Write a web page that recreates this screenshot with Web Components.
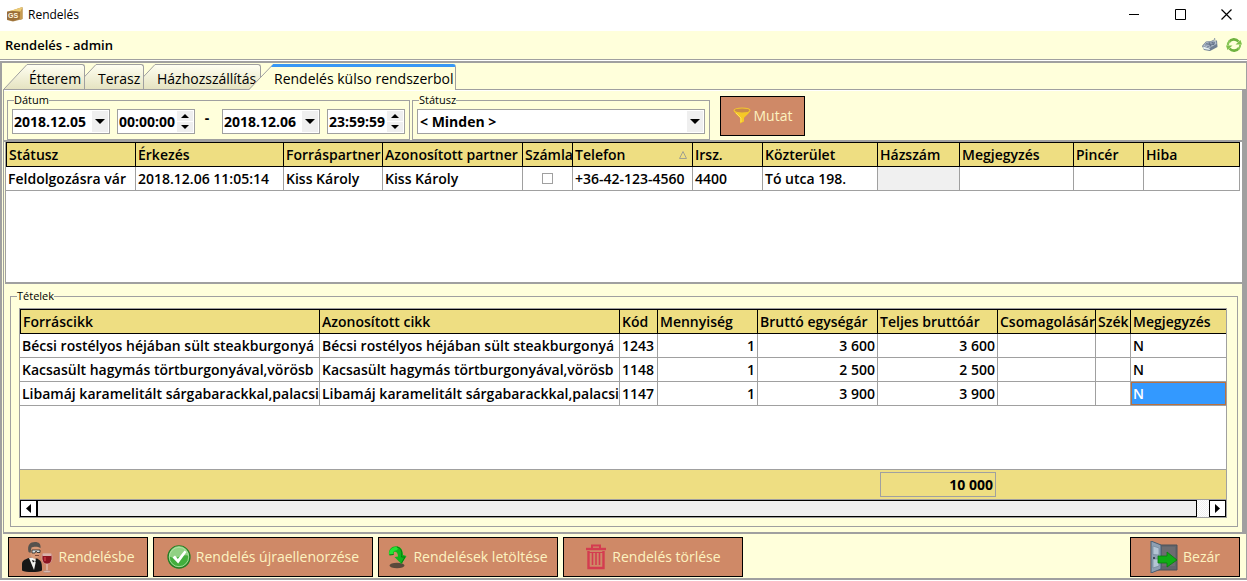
<!DOCTYPE html>
<html lang="hu">
<head>
<meta charset="utf-8">
<title>Rendelés</title>
<style>
  html, body { margin: 0; min-height: 100%; }
  body {
    --paper: #ffffdb;
    --line: #a0a0a0;
    --sand: #eede82;
    --clay: #cf8967;
    --cream: #fdf3c0;
    font-family: "Open Sans", "Noto Sans", sans-serif;
    font-size: 14px;
    line-height: 18px;
    color: #000;
    background: #fff;
  }
</style>
</head>
<body>
<order-window></order-window>

<script>
const ICONS = {
  logo: `<svg width="16" height="16" viewBox="0 0 16 16"><path d="M0 4.500 5 3.500 15.500 0V12L14 12.500 6 14.500 0 13Z" fill="#b08a50"/><path d="M3 4 15.500 0 14 5 13 4.500Z" fill="#eccb74"/><path d="M13 5 15.500 1V12L12.500 13Z" fill="#c79c52"/><path d="M0 5 6 4 13 5 12.500 12 6 14 0 12.500Z" fill="#9a6e38"/><text x="1" y="11" font-family="Liberation Sans" font-weight="700" font-size="7" fill="#fff6e0">GS</text></svg>`,
  keyboard: `<svg width="16" height="14" viewBox="0 0 16 14"><path d="M8 4 13 1.500 12.500 0" fill="none" stroke="#8a97a4" stroke-width="1"/><path d="M4 3.500 15 2.500 15.500 9 8 13 2 12 0 8Z" fill="#6f7f92"/><path d="M4.500 4 14 3 14.500 6 7.500 10 1 8Z" fill="#b5c0cf"/><path d="M4 5.500 13 4.500M3 7 12 6M5 9 13 5.500M7 4 9 9M10 4 12 7" stroke="#56657c" stroke-width=".7"/><path d="M1 8.500 7.500 10.500 8 12 1.500 11Z" fill="#e7f1f1"/></svg>`,
  refresh: `<svg width="16" height="16" viewBox="0 0 16 16"><path d="M3 5A6 6 0 0 1 12.500 4.500M13 11A6 6 0 0 1 3.500 11.500" fill="none" stroke="#6fb23f" stroke-width="2.600"/><path d="M9.500 7.500H16L14.500 3ZM0 8.500H6.500L1.500 13Z" fill="#7fc04b"/><path d="M1.800 8.500C1.500 6 2.500 5 4 3.500M14.200 7.500C14.500 10 13.500 11 12 12.500" fill="none" stroke="#88c658" stroke-width="2"/></svg>`,
  funnel: `<svg width="18" height="18" viewBox="0 0 18 18"><path d="M1 3.500C1 6 6.500 10 7 11V16.500L11 14.500V11C11.500 10 17 6 17 3.500Z" fill="#f6c926"/><ellipse cx="9" cy="3.500" rx="8" ry="2.500" fill="#c98a4a" stroke="#f3c62d" stroke-width="1.200"/><path d="M3 6 8 11V15" fill="none" stroke="#ffe05c"/></svg>`,
  waiter: `<svg width="32" height="32" viewBox="0 0 32 32"><path d="M1 29.500V23C1 20 3 18.500 8 17L14 16 19 19.500C21 21 21 26 21 29.500 17 31.500 5 31.500 1 29.500Z" fill="#171717"/><path d="M8 17 14 16 15 20 13 29Z" fill="#f2f2ef"/><path d="M11 19 14 20 12 21.500ZM14 20 16 19 15.500 22Z" fill="#101010"/><path d="M8.500 6C9 3 18 2 19 6L18.500 13C18 17 15 18.500 12.500 17.500 9.500 16 8.500 12 8.500 6Z" fill="#d79a77"/><path d="M7.500 11C6 4 9 1 14 1 18 1 20 3 19.500 7 16 5 12 6 10.500 6.500L9.500 12Z" fill="#55524d"/><path d="M11 9H19V11.500H16L15 10 14 12H11Z" fill="#dbe5e8" stroke="#222" stroke-width=".8"/><path d="M14 14.500H18" stroke="#7e4738"/><path d="M21.500 13H30.500C32 19 30 23 26 23 22 23 20 19 21.500 13Z" fill="#8d1420" stroke="#d5a2a0" stroke-width=".8"/><path d="M22 12.500H30L30.500 15H21.500Z" fill="#d9b3ac"/><path d="M24 16V20" stroke="#d3404a" stroke-width="1.300"/><path d="M26 23V30" stroke="#e7c7bd" stroke-width="1.200"/><ellipse cx="26" cy="30.500" rx="4" ry="1" fill="#d9c0b7" stroke="#a77b71" stroke-width=".5"/></svg>`,
  check: `<svg width="24" height="24" viewBox="0 0 24 24"><circle cx="12" cy="12" r="11" fill="#43ae3c" stroke="#247d24" stroke-width="1.300"/><path d="M2 11A10 10 0 0 1 22 11C17 8 8 16 2 11Z" fill="#91d184"/><circle cx="12" cy="12" r="9.700" fill="none" stroke="#b7e5ac" stroke-width=".8"/><path d="M5.500 12.500 8 10.500 10.800 14 17.500 5.500 19.500 7 11.200 18.500Z" fill="#fff"/></svg>`,
  download: `<svg width="20" height="24" viewBox="0 0 20 24"><ellipse cx="9" cy="20.500" rx="7.500" ry="2.800" fill="#5a493b"/><path d="M1 10C0 4 5 .5 9.500 1.500 14 2.500 15 7 15 10L18.500 11 13.500 19 6.500 12 10 11.500C10 8 8 6 6 7L5.500 10Z" fill="#0fb51c"/><path d="M1 9.500C1 4 5 2 8 2 11 2.500 10 5 8 5.500 5 5.500 5 8 5 10Z" fill="#25e335"/><path d="M9 2C14 3 14 8 13.500 12L17 12 13.500 18" fill="none" stroke="#077d10"/><path d="M1.500 10 5.500 9.500" stroke="#087912"/></svg>`,
  trash: `<svg width="22" height="26" viewBox="0 0 22 26"><g fill="none" stroke="#d43c50"><path d="M1 5H21" stroke-width="2.400"/><path d="M7 4V1.500H15V4" stroke-width="2"/><path d="M3.500 7V24H18.500V7" stroke-width="2.400"/><path d="M7.500 9V21M11 9V21M14.500 9V21" stroke-width="1.600"/><path d="M3 8.500H19" stroke-width="1"/></g></svg>`,
  door: `<svg width="28" height="32" viewBox="0 0 28 32"><path d="M8 4H27V29H8Z" fill="#61656b" stroke="#4b5159"/><path d="M12 6H25V25H12Z" fill="#6d6c70"/><path d="M1 0 11 4V28L1 32Z" fill="#8ea0b3" stroke="#475c70"/><path d="M3 5 9 7V14L3 13.500ZM3 18 9 18V25L3 27Z" fill="#b4c5d4" stroke="#6b8092" stroke-width=".6"/><circle cx="4" cy="17" r="1" fill="#243747"/><path d="M8 15H17V11L27 19 17 26V22H8Z" fill="#0fac16" stroke="#077b0d" stroke-width=".8"/></svg>`,
  down: `<svg width="10" height="5" viewBox="0 0 10 5"><path d="M0 0H10L5 5Z" fill="#000"/></svg>`
};

function define(name, html, setup) {
  customElements.define(name, class extends HTMLElement {
    constructor() {
      super();
      const t = document.createElement('template');
      t.innerHTML = html;
      this.attachShadow({ mode: 'open' }).append(t.content.cloneNode(true));
    }
    connectedCallback() { if (setup) setup(this, this.shadowRoot); }
  });
}

define('ui-icon', `<style>:host{display:inline-flex;flex:none}svg{display:block}</style><span></span>`,
  (el, root) => { root.querySelector('span').innerHTML = ICONS[el.getAttribute('name')]; });

define('title-bar', `
<style>
  :host { display: flex; align-items: center; height: 29px; margin-bottom: 2px; background: #fff; font: 12px/16px "Open Sans", "Noto Sans", sans-serif; padding-left: 7px; gap: 5px; }
  span { flex: 1; }
  button { width: 46px; height: 29px; border: 0; padding: 0; background: none; display: grid; place-items: center; }
  nav { display: flex; margin-right: -2px; }
</style>
<ui-icon name="logo"></ui-icon><span><slot></slot></span>
<nav>
  <button aria-label="Kis méret"><svg width="11" height="11"><path d="M0 5.500H10" stroke="#000"/></svg></button>
  <button aria-label="Teljes méret"><svg width="11" height="11"><path d="M.5.5H10.500V10.500H.5Z" fill="none" stroke="#000"/></svg></button>
  <button aria-label="Bezárás"><svg width="11" height="11"><path d="M.5.5 10.500 10.500M10.500.5.5 10.500" stroke="#000" stroke-width="1.200"/></svg></button>
</nav>`);

define('user-bar', `
<style>
  :host { display: flex; align-items: center; height: 28px; background: var(--paper); padding: 0 5px; gap: 8px; border-bottom: 1px solid var(--line); }
  h1 { flex: 1; margin: 0; font: 600 13px/18px "Open Sans", "Noto Sans", sans-serif; }
  button { border: 0; padding: 0; background: none; display: flex; }
</style>
<h1><slot></slot></h1>
<button aria-label="Billentyűzet"><ui-icon name="keyboard"></ui-icon></button>
<button aria-label="Frissítés"><ui-icon name="refresh"></ui-icon></button>`);

define('page-tab', `
<style>
  :host { display: block; position: relative; width: var(--w); margin-left: -12px; }
  :host(:first-child) { margin-left: 0; z-index: 3; }
  :host(:nth-child(2)) { z-index: 2; }
  :host([active]) { z-index: 4; }
  button { display: flex; width: 100%; height: 26px; border: 0; padding: 0; background: none; font: inherit; color: #000; text-align: left; white-space: nowrap; }
  svg { display: block; flex: none; }
  span { flex: 1; box-sizing: border-box; height: 25px; padding: 5px 0 0 1px; border: 1px solid var(--line); border-width: 1px 1px 0 0; border-radius: 0 3px 0 0; background: linear-gradient(#fffff2, #e5e3c1); line-height: 18px; }
  :host([active]) span { height: 26px; background: var(--paper); border-top: 3px solid #3797f5; padding-top: 3px; }
</style>
<button role="tab"><svg width="24" height="26"></svg><span><slot></slot></span></button>`,
  (el, root) => {
    const on = el.hasAttribute('active');
    root.querySelector('button').setAttribute('aria-selected', on);
    root.querySelector('svg').innerHTML = on
      ? `<path d="M24 0V26H0Z" fill="#ffffdb"/><path d="M0 25.500 23.500 1" stroke="#a0a0a0"/><path d="M22 3 24 0V3Z" fill="#3797f5"/>`
      : `<defs><linearGradient id="g" x2="0" y2="1"><stop stop-color="#fffff2"/><stop offset="1" stop-color="#e5e3c1"/></linearGradient></defs><path d="M24 0V25H0Z" fill="url(#g)"/><path d="M0 25 23 .5H24" fill="none" stroke="#a0a0a0"/>`;
  });

define('group-box', `
<style>
  :host { display: block; min-width: 0; }
  fieldset { box-sizing: border-box; height: 100%; margin: 0; min-width: 0; border: 1px solid var(--line); padding: var(--pad, 2px 4px 4px); }
  legend { margin-left: var(--legend, 2px); padding: 0; font-size: 11px; line-height: 14px; }
</style>
<fieldset><legend></legend><slot></slot></fieldset>`,
  (el, root) => { root.querySelector('legend').textContent = el.getAttribute('caption'); });

define('drop-box', `
<style>
  :host { display: flex; position: relative; box-sizing: border-box; height: 25px; border: 1px solid var(--line); background: #fff; }
  select { appearance: none; flex: 1; min-width: 0; border: 0; padding: 0 18px 0 var(--inset, 1px); background: none; font: bold 14px/20px "Open Sans", "Noto Sans", sans-serif; color: #000; }
  i { position: absolute; top: 1px; right: 1px; bottom: 1px; width: 16px; background: #efefef; display: grid; place-items: center; pointer-events: none; }
</style>
<select></select><i><ui-icon name="down"></ui-icon></i>`,
  (el, root) => {
    const s = root.querySelector('select');
    s.setAttribute('aria-label', el.getAttribute('label'));
    s.replaceChildren(new Option(el.getAttribute('value')));
  });

define('time-box', `
<style>
  :host { display: flex; box-sizing: border-box; width: 78px; height: 25px; border: 1px solid var(--line); background: #fff; padding: 1px; }
  input { flex: 1; min-width: 0; border: 0; padding: 0; background: none; font: bold 14px/20px "Open Sans", "Noto Sans", sans-serif; color: #000; }
  div { display: grid; gap: 1px; width: 16px; }
  button { border: 0; padding: 0; background: #efefef; display: grid; place-items: center; }
  svg { display: block; }
</style>
<input type="text">
<div>
  <button aria-label="Növelés"><svg width="8" height="4"><path d="M0 4H8L4 0Z"/></svg></button>
  <button aria-label="Csökkentés"><svg width="8" height="4"><path d="M0 0H8L4 4Z"/></svg></button>
</div>`,
  (el, root) => {
    const i = root.querySelector('input');
    i.value = el.getAttribute('value');
    i.setAttribute('aria-label', el.getAttribute('label'));
  });

define('action-button', `
<style>
  :host { display: block; width: var(--w); }
  button { box-sizing: border-box; width: 100%; height: 40px; border: 1px solid #000; padding: 0; background: var(--clay); color: var(--cream); font: inherit; display: flex; align-items: center; justify-content: center; gap: var(--gap, 5px); white-space: nowrap; }
</style>
<button type="button"><ui-icon></ui-icon><slot></slot></button>`,
  (el, root) => {
    const old = root.querySelector('ui-icon');
    const icon = document.createElement('ui-icon');
    icon.setAttribute('name', el.getAttribute('icon'));
    old.replaceWith(icon);
  });

const GRIDS = {
  orders: {
    cols: [['Státusz', 130], ['Érkezés', 148], ['Forráspartner', 99], ['Azonosított partner', 140], ['Számla', 50], ['Telefon', 120, 'sort'], ['Irsz.', 70], ['Közterület', 115], ['Házszám', 82], ['Megjegyzés', 114], ['Pincér', 70], ['Hiba', 96]],
    rows: [['Feldolgozásra vár', '2018.12.06 11:05:14', 'Kiss Károly', 'Kiss Károly', '[ ]', '+36-42-123-4560', '4400', 'Tó utca 198.', '[off]', '', '', '']]
  },
  items: {
    cols: [['Forráscikk', 300], ['Azonosított cikk', 300], ['Kód', 38], ['Mennyiség', 100, 'num'], ['Bruttó egységár', 120, 'num'], ['Teljes bruttóár', 120, 'num'], ['Csomagolásár', 98], ['Szék', 35], ['Megjegyzés', 96]],
    rows: [
      ['Bécsi rostélyos héjában sült steakburgonyá', 'Bécsi rostélyos héjában sült steakburgonyá', '1243', '1', '3 600', '3 600', '', '', 'N'],
      ['Kacsasült hagymás törtburgonyával,vörösb', 'Kacsasült hagymás törtburgonyával,vörösb', '1148', '1', '2 500', '2 500', '', '', 'N'],
      ['Libamáj karamelitált sárgabarackkal,palacsi', 'Libamáj karamelitált sárgabarackkal,palacsi', '1147', '1', '3 900', '3 900', '', '', '*N']
    ]
  }
};

define('data-grid', `
<style>
  :host { display: block; overflow: hidden; background: #fff; }
  table { width: 100%; table-layout: fixed; border-collapse: separate; border-spacing: 0; font-weight: 600; }
  th, td { box-sizing: border-box; height: 24px; padding: 0 2px; border: 0 solid var(--line); border-width: 0 1px 1px 0; text-align: left; white-space: nowrap; overflow: hidden; line-height: 20px; }
  th { height: 25px; font-weight: 600; background: var(--sand); border-color: #000; border-top-width: 1px; }
  th:first-child { border-left-width: 1px; }
  :host([wide]) tr > :last-child { border-right-width: 0; }
  td.num { text-align: right; }
  td.off { background: #f0f0f0; }
  td.sel { background: #3399ff; color: #fff; box-shadow: inset 0 0 0 1px #b87040; }
  th.sort svg { float: right; margin: 6px 3px 0 0; }
  input { appearance: none; display: block; box-sizing: border-box; width: 11px; height: 11px; margin: 0 auto; border: 1px solid var(--line); background: #fff; }
</style>
<table><colgroup></colgroup><thead><tr></tr></thead><tbody></tbody></table>`,
  (el, root) => {
    const g = GRIDS[el.getAttribute('source')];
    const last = g.cols.length - 1;
    root.querySelector('colgroup').innerHTML = g.cols.map((c, i) => i === last ? '<col>' : `<col style="width:${c[1]}px">`).join('');
    root.querySelector('thead tr').innerHTML = g.cols.map(c => c[2] === 'sort'
      ? `<th scope="col" class="sort" aria-sort="ascending"><svg width="8" height="8"><path d="M.5 7.500H7.500L4 .5Z" fill="none" stroke="#a0a090"/></svg>${c[0]}</th>`
      : `<th scope="col">${c[0]}</th>`).join('');
    root.querySelector('tbody').innerHTML = g.rows.map(r => '<tr>' + r.map((v, i) => {
      if (v === '[ ]') return '<td><input type="checkbox" aria-label="Számla"></td>';
      if (v === '[off]') return '<td class="off"></td>';
      if (v[0] === '*') return `<td class="sel">${v.slice(1)}</td>`;
      return `<td${g.cols[i][2] === 'num' ? ' class="num"' : ''}>${v}</td>`;
    }).join('') + '</tr>').join('');
  });

define('sum-row', `
<style>
  :host { display: grid; grid-template-columns: 860px 116px; height: 29px; align-items: center; background: var(--sand); border: 1px solid var(--line); border-width: 1px 0; }
  output { grid-column: 2; box-sizing: border-box; height: 25px; border: 1px solid var(--line); padding: 0 2px; font-weight: bold; line-height: 23px; text-align: right; }
</style>
<output><slot></slot></output>`);

define('scroll-bar', `
<style>
  :host { display: flex; height: 17px; background: repeating-conic-gradient(#fff 0 25%, #f0f0f0 0 50%) 0 0 / 2px 2px; }
  button { box-sizing: border-box; width: 17px; height: 17px; flex: none; border: 1px solid #000; background: #fff; padding: 0; display: grid; place-items: center; }
  div { box-sizing: border-box; flex: 1; margin-right: 12px; border: 1px solid #000; background: #efefef; }
</style>
<button aria-label="Balra"><svg width="5" height="9"><path d="M5 0V9L0 4.500Z"/></svg></button><div></div><button aria-label="Jobbra"><svg width="5" height="9"><path d="M0 0V9L5 4.500Z"/></svg></button>`);

define('order-window', `
<style>
  :host { display: flex; flex-direction: column; min-height: 100vh; background: #fff; }
  .frame { flex: 1; display: flex; flex-direction: column; margin-top: 1px; margin-bottom: 1px; border: 2px solid var(--line); border-right-width: 1px; background: var(--paper); }
  .tabs { display: flex; padding: 1px 0 0 2px; height: 26px; position: relative; }
  .tabs::after { content: ""; position: absolute; left: 1px; right: 0; bottom: 0; height: 1px; background: var(--line); }
  .sheet { flex: 1; display: flex; flex-direction: column; margin-left: 1px; border-left: 1px solid var(--line); border-right: 4px solid var(--line); }
  .filters { display: flex; height: 47px; padding: 2px 0 0 3px; gap: 2px; border-bottom: 2px solid var(--line); border-top: 1px solid #fff; }
  .row { display: flex; }
  .row > :nth-child(2) { margin-left: 7px; }
  .row > :nth-child(5) { margin-left: 7px; }
  .dash { width: 24px; padding-right: 3px; text-align: center; font-weight: bold; line-height: 18px; }
  .date { width: 98px; }
  .period { width: 403px; }
  .status { width: 298px; --inset: 2px; }
  .filters action-button { margin: 3px 0 0 8px; }
  .orders { margin-left: 1px; padding-right: 2px; height: 140px; border-left: 1px solid var(--line); border-bottom: 2px solid var(--line); }
  .items { flex: 1; padding: 5px 4px 5px 6px; display: flex; flex-direction: column; --pad: 5px 10px 8px 8px; --legend: -2px; }
  .items group-box { flex: 1; }
  .box { box-sizing: border-box; height: 210px; display: flex; flex-direction: column; border: 1px solid var(--line); }
  .box data-grid { flex: 1; }
  .actions { display: flex; gap: 5px; padding: 3px 6px 0 5px; height: 41px; border-top: 2px solid var(--line); margin-left: 1px; }
  .actions action-button:last-child { margin-left: auto; }
</style>
<title-bar>Rendelés</title-bar>
<user-bar>Rendelés - admin</user-bar>
<main class="frame">
  <div class="tabs" role="tablist">
    <page-tab style="--w:81px">Étterem</page-tab>
    <page-tab style="--w:71px">Terasz</page-tab>
    <page-tab style="--w:129px">Házhozszállítás</page-tab>
    <page-tab style="--w:207px" active>Rendelés külso rendszerbol</page-tab>
  </div>
  <div class="sheet">
    <div class="filters">
      <group-box class="period" caption="Dátum">
        <div class="row">
          <drop-box class="date" label="Kezdő dátum" value="2018.12.05"></drop-box>
          <time-box label="Kezdő időpont" value="00:00:00"></time-box>
          <span class="dash">-</span>
          <drop-box class="date" label="Záró dátum" value="2018.12.06"></drop-box>
          <time-box label="Záró időpont" value="23:59:59"></time-box>
        </div>
      </group-box>
      <group-box class="status" caption="Státusz"><drop-box label="Státusz" value="&lt; Minden &gt;"></drop-box></group-box>
      <action-button icon="funnel" style="--w:85px;--gap:3px">Mutat</action-button>
    </div>
    <data-grid class="orders" source="orders"></data-grid>
    <section class="items">
      <group-box caption="Tételek">
        <div class="box">
          <data-grid source="items" wide></data-grid>
          <sum-row>10 000</sum-row>
          <scroll-bar></scroll-bar>
        </div>
      </group-box>
    </section>
  </div>
  <footer class="actions">
    <action-button icon="waiter" style="--w:140px">Rendelésbe</action-button>
    <action-button icon="check" style="--w:220px">Rendelés újraellenorzése</action-button>
    <action-button icon="download" style="--w:180px">Rendelések letöltése</action-button>
    <action-button icon="trash" style="--w:180px">Rendelés törlése</action-button>
    <action-button icon="door" style="--w:110px">Bezár</action-button>
  </footer>
</main>`);
</script>
</body>
</html>
